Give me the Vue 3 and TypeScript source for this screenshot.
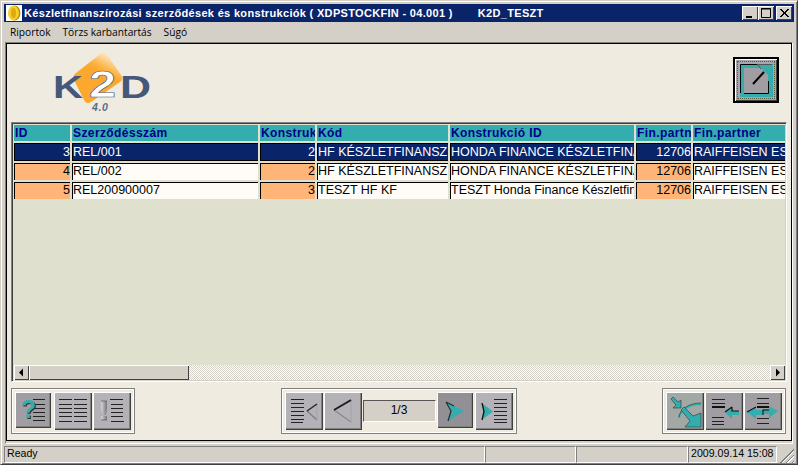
<script setup lang="ts">
interface Column {
  title: string;
  numeric?: boolean;
}

const columns: Column[] = [
  { title: "ID", numeric: true },
  { title: "Szerződésszám" },
  { title: "Konstruk", numeric: true },
  { title: "Kód" },
  { title: "Konstrukció ID" },
  { title: "Fin.partn", numeric: true },
  { title: "Fin.partner" },
];

const rows: string[][] = [
  ["3", "REL/001", "2", "HF KÉSZLETFINANSZÍROZÁS", "HONDA FINANCE KÉSZLETFINANSZÍROZÁS", "12706", "RAIFFEISEN ESZKÖZ"],
  ["4", "REL/002", "2", "HF KÉSZLETFINANSZÍROZÁS", "HONDA FINANCE KÉSZLETFINANSZÍROZÁS", "12706", "RAIFFEISEN ESZKÖZ"],
  ["5", "REL200900007", "3", "TESZT HF KF", "TESZT Honda Finance Készletfinanszírozás", "12706", "RAIFFEISEN ESZKÖZ"],
];

const menus = ["Riportok", "Törzs karbantartás", "Súgó"];
const statusPanels = ["Ready", "", "", "2009.09.14 15:08"];
</script>

<template>
  <div class="window">
    <div class="titlebar">
      <span class="app-icon">
        <svg width="16" height="16" viewBox="0 0 16 16">
          <ellipse cx="8.5" cy="8" rx="6" ry="7.5" fill="#b98a00" />
          <ellipse cx="7.5" cy="8" rx="5.5" ry="7.2" fill="#f7cf2a" />
          <ellipse cx="7.5" cy="8" rx="2.5" ry="5" fill="#e0a810" />
        </svg>
      </span>
      <span class="title-text">Készletfinanszírozási szerződések és konstrukciók ( XDPSTOCKFIN - 04.001 )</span>
      <span class="title-user">K2D_TESZT</span>
      <div class="win-buttons">
        <button class="win-btn">
          <svg width="16" height="14" viewBox="0 0 16 14"><path d="M4 10h6v2H4z" fill="#000" /></svg>
        </button>
        <button class="win-btn">
          <svg width="16" height="14" viewBox="0 0 16 14"><path d="M3.5 2.5h9v9h-9zM3 3h10" fill="none" stroke="#000" /></svg>
        </button>
        <button class="win-btn close">
          <svg width="16" height="14" viewBox="0 0 16 14"><path d="M4 3l8 8M5 3l8 8M12 3l-8 8M13 3l-8 8" stroke="#000" /></svg>
        </button>
      </div>
    </div>

    <div class="menubar">
      <span v-for="item in menus" :key="item" class="menu-item">{{ item }}</span>
    </div>

    <div class="client-bevel">
      <div class="client">
        <div class="top-area">
          <svg class="logo" width="100" height="64" viewBox="0 0 100 64">
            <defs>
              <linearGradient id="diamond" x1="0.8" y1="0.02" x2="0.6" y2="0.4">
                <stop offset="0" stop-color="#fdf2e2" />
                <stop offset="0.7" stop-color="#fcb950" />
                <stop offset="1" stop-color="#faa82e" />
              </linearGradient>
            </defs>
            <path d="M46 5Q51 0 55 6L68 25Q71 29 67 32L38 52Q33 55 31 50L21 30Q19 26 23 23Z" fill="url(#diamond)" />
            <text x="0" y="48" class="logo-letter" textLength="30" lengthAdjust="spacingAndGlyphs">K</text>
            <text x="36" y="47" class="logo-two" textLength="27" lengthAdjust="spacingAndGlyphs">2</text>
            <text x="67" y="48" class="logo-letter" textLength="31" lengthAdjust="spacingAndGlyphs">D</text>
            <text x="39" y="61" class="logo-version">4.0</text>
          </svg>
          <button class="expand-btn">
            <span class="expand-focus">
              <svg width="38" height="38" viewBox="0 0 38 38">
                <path d="M3 3h33v33H3z" fill="#33adad" />
                <path d="M7 7h24v25H7z" fill="#a09ea2" />
                <path d="M3.5 32V3.5H20M7 32.5h24.5V20" fill="none" stroke="#000" />
                <path d="M20 3h16v16z" fill="#33adad" />
                <path d="M20 3.500h15M20 3l4 5" stroke="#555" fill="none" />
                <path d="M16 23l11-12" stroke="#000" stroke-width="2" />
              </svg>
            </span>
          </button>
        </div>

        <div class="data-grid">
          <div class="grid-body">
            <div class="grid-table">
              <div v-for="col in columns" :key="col.title" class="head-cell">{{ col.title }}</div>
              <template v-for="(row, r) in rows" :key="r">
                <div
                  v-for="(value, c) in row"
                  :key="c"
                  class="cell"
                  :class="{ selected: r === 0, numeric: columns[c].numeric }"
                >
                  {{ value }}
                </div>
              </template>
            </div>
          </div>
          <div class="scrollbar">
            <span class="scroll-btn">
              <svg width="15" height="15" viewBox="0 0 15 15"><path d="M9 3.5v8L5 7.5z" fill="#000" /></svg>
            </span>
            <span class="scroll-thumb"></span>
            <span class="scroll-track"></span>
            <span class="scroll-btn">
              <svg width="15" height="15" viewBox="0 0 15 15"><path d="M6 3.5v8l4-4z" fill="#000" /></svg>
            </span>
          </div>
        </div>

        <div class="toolbar">
          <div class="tool-group">
            <button class="tool-btn dark narrow spaced">
              <svg width="32" height="32" viewBox="0 0 32 32">
                <path d="M16 5.500h12M16 10.500h12M16 14.500h12M16 18.500h12M16 22.500h12M16 26.500h12" stroke="#222" />
                <text x="4" y="24" class="help-mark">?</text>
              </svg>
            </button>
            <button class="tool-btn">
              <svg width="34" height="34" viewBox="0 0 34 34">
                <path d="M3 5.5h13M18 5.5h13M3 10.5h13M18 10.5h13M3 14.5h13M18 14.5h13M3 18.5h13M18 18.5h13M3 22.5h13M18 22.5h13M3 27.5h13M18 27.5h13" stroke="#222" />
              </svg>
            </button>
            <button class="tool-btn">
              <svg width="34" height="34" viewBox="0 0 34 34">
                <defs>
                  <linearGradient id="bang" x1="0" x2="1" y1="0" y2="0">
                    <stop offset="0" stop-color="#d8d6d8" />
                    <stop offset="1" stop-color="#777577" />
                  </linearGradient>
                </defs>
                <path d="M15 5.5h13M16 10.5h12M16 14.5h12M16 18.5h12M16 22.5h12M16 27.5h13" stroke="#222" />
                <path d="M6 7h6v8l-1 6H8l-2-6z" fill="url(#bang)" />
                <path d="M6 22h6v4H6z" fill="url(#bang)" />
                <path d="M6 7h6M6 26h6" stroke="#555" stroke-width="0.7" />
              </svg>
            </button>
          </div>

          <div class="tool-group">
            <button class="tool-btn">
              <svg width="34" height="34" viewBox="0 0 34 34">
                <path d="M4 5.5h13M4 9.5h13M4 13.5h13M4 17.5h13M4 21.5h13M4 25.5h13M4 28.5h12" stroke="#222" />
                <path d="M20 17l10 9" fill="none" stroke="#807e82" stroke-width="1.4" />
                <path d="M30 10v16" fill="none" stroke="#a4a2a6" stroke-width="1" />
                <path d="M30 10L20 17" stroke="#222" stroke-width="1.4" />
              </svg>
            </button>
            <button class="tool-btn">
              <svg width="34" height="34" viewBox="0 0 34 34">
                <path d="M8 16l17 12" fill="none" stroke="#8a888c" stroke-width="1.4" />
                <path d="M25 28V6" fill="none" stroke="#a4a2a6" stroke-width="1" />
                <path d="M25 6L8 16" stroke="#1c1c1c" stroke-width="2" />
              </svg>
            </button>
            <div class="page-box">1/3</div>
            <button class="tool-btn darker narrow spaced-sm">
              <svg width="32" height="32" viewBox="0 0 32 32">
                <path d="M7 8l18 9-16 10 3-10z" fill="#33adad" />
                <path d="M7 8l5 9-3 10M7 8l8 4" fill="none" stroke="#2c2c2c" stroke-width="1.2" />
              </svg>
            </button>
            <button class="tool-btn">
              <svg width="34" height="34" viewBox="0 0 34 34">
                <path d="M17 5.5h13M17 9.5h13M17 13.5h13M17 17.5h13M17 21.5h13M17 25.5h13M17 28.5h13" stroke="#222" />
                <path d="M6 10l10 7.5L6 25z" fill="#33adad" />
                <path d="M5 9l2 8.500-2 8.500" fill="none" stroke="#111" stroke-width="1.3" />
              </svg>
            </button>
          </div>

          <div class="tool-group">
            <button class="tool-btn lighter">
              <svg width="34" height="34" viewBox="0 0 34 34">
                <path d="M3 5L5 3L10 8L13 6V14H5L8 11Z" fill="#33adad" stroke="#333" stroke-width="0.6" />
                <path d="M11 24c1-8 10-14 22-14" fill="none" stroke="#33adad" stroke-width="2" />
                <path d="M11 24c1-8 10-14 22-14" fill="none" stroke="#222" stroke-width="0.5" transform="translate(0 -1)" />
                <path d="M13 16L16 13L25 22L33 19V33H17L22 27Z" fill="#33adad" stroke="#333" stroke-width="0.6" />
              </svg>
            </button>
            <button class="tool-btn dark">
              <svg width="34" height="34" viewBox="0 0 34 34">
                <path d="M5 5.500h13M5 9.500h13M5 23.500h12M5 27.500h12M5 30.500h12" stroke="#222" />
                <path d="M5 13h13" stroke="#111" stroke-width="2" />
                <path d="M18 18l7-5v4h7v4h-7v4z" fill="#33adad" />
                <path d="M18 18l7-5M25 13v4h7" fill="none" stroke="#111" stroke-width="1.2" />
              </svg>
            </button>
            <button class="tool-btn dark">
              <svg width="34" height="34" viewBox="0 0 34 34">
                <path d="M11 4.500h12M11 9.500h12M11 24.500h12M11 29.500h12" stroke="#222" />
                <path d="M11 13h12" stroke="#111" stroke-width="2" />
                <path d="M1 18l9-5v3h7v5h-7v4z" fill="#33adad" />
                <path d="M32 17l-9-5v3h-6v5h6v4z" fill="#33adad" />
                <path d="M1 18l9-5M17 21v-5h6" fill="none" stroke="#111" stroke-width="1.1" />
              </svg>
            </button>
          </div>
        </div>
      </div>
    </div>

    <div class="statusbar">
      <span v-for="(text, i) in statusPanels" :key="i" class="status-panel">{{ text }}</span>
      <span class="grip"></span>
    </div>
  </div>
</template>

<style>
html,
body {
  margin: 0;
  background: #d4d0c8;
}
</style>

<style scoped>
.window {
  box-sizing: border-box;
  width: 798px;
  height: 465px;
  display: flex;
  flex-direction: column;
  padding: 3px 3px 2px;
  background: #d4d0c8;
  border: 1px solid;
  border-color: #d4d0c8 #404040 #404040 #d4d0c8;
  box-shadow: inset 1px 1px 0 #fff, inset -1px -1px 0 #808080;
  font-family: "Liberation Sans", Arial, sans-serif;
  overflow: hidden;
}

.titlebar {
  flex: none;
  height: 18px;
  display: flex;
  align-items: center;
  background: #0a246a;
  color: #fff;
  font: bold 11px "Liberation Sans", Arial, sans-serif;
  letter-spacing: 0.32px;
}

.app-icon {
  flex: none;
  width: 16px;
  height: 16px;
  margin: 0 2px;
  background: #fff;
}

.app-icon svg {
  display: block;
}

.title-text {
  white-space: pre;
}

.title-user {
  margin-left: 25px;
}

.win-buttons {
  margin-left: auto;
  display: flex;
  margin-right: 2px;
}

.win-btn {
  width: 16px;
  height: 14px;
  padding: 0;
  border: 0;
  background: #d4d0c8;
  box-shadow: inset 1px 1px 0 #fff, inset -1px -1px 0 #404040;
}

.win-btn svg {
  display: block;
}

.win-btn.close {
  margin-left: 2px;
}

.menubar {
  flex: none;
  height: 20px;
  display: flex;
  align-items: center;
  gap: 12px;
  padding-left: 6px;
  font-family: "Open Sans", sans-serif;
  font-size: 10.2px;
  color: #000;
}

.client-bevel {
  flex: none;
  height: 400px;
  margin: 0 1px;
  border: 1px solid;
  border-color: #808080 #fff #fff #808080;
}

.client {
  box-sizing: border-box;
  height: 398px;
  display: flex;
  flex-direction: column;
  gap: 6px;
  padding: 0 4px 6px;
  border: 1px solid #000;
  background: #efebe0;
}

.top-area {
  flex: none;
  height: 78px;
  margin-bottom: -6px;
  display: flex;
  justify-content: space-between;
  align-items: flex-start;
}

.logo {
  margin: 6px 0 0 42px;
}

.logo-letter {
  font: bold 32px "Liberation Sans", sans-serif;
  fill: #46587a;
}

.logo-two {
  font: bold 37px "Liberation Sans", sans-serif;
  fill: #fff;
  stroke: #46587a;
  stroke-width: 0.6px;
}

.logo-version {
  font: italic bold 10.5px "Liberation Sans", sans-serif;
  letter-spacing: 0.6px;
  fill: #5a6a88;
}

.expand-btn {
  box-sizing: border-box;
  width: 46px;
  height: 46px;
  margin: 13px 8px 0 0;
  padding: 2px;
  border: 2px solid #000;
  background: #a8a6aa;
  box-shadow: inset 1px 1px 0 #fff, inset -1px -1px 0 #404040;
}

.expand-focus {
  display: block;
  width: 38px;
  height: 38px;
  outline: 1px dotted #5a5a40;
  outline-offset: -1px;
}

.expand-focus svg {
  display: block;
}

.data-grid {
  flex: 1;
  min-height: 0;
  display: flex;
  flex-direction: column;
  border: 1px solid;
  border-color: #808080 #fff #fff #808080;
  box-shadow: inset 1px 1px 0 #404040, inset -1px -1px 0 #d4d0c8;
  background: #dfe0ce;
  padding: 1px;
}

.grid-body {
  flex: 1;
  min-height: 0;
  overflow: hidden;
  padding: 1px 0 0 1px;
}

.grid-table {
  display: grid;
  grid-template-columns: 56px 186px 55px 131px 184px 55px 92px;
  grid-template-rows: 16px 18px 17px 17px;
  gap: 2px;
  font-size: 12.5px;
}

.head-cell {
  background: #33adad;
  color: #00008b;
  font-size: 12px;
  font-weight: bold;
  line-height: 16px;
  letter-spacing: 0.4px;
  padding-left: 1px;
  white-space: nowrap;
  overflow: hidden;
}

.cell {
  box-sizing: border-box;
  border-top: 1px solid #000;
  border-left: 1px solid #000;
  background: #fffcf8;
  color: #000;
  line-height: 15px;
  white-space: nowrap;
  overflow: hidden;
}

.cell.numeric {
  background: #ffb478;
  text-align: right;
}

.cell.selected {
  background: #0a246a;
  color: #fff;
  line-height: 16px;
  border-bottom: 1px solid #000;
}

.scrollbar {
  flex: none;
  height: 15px;
  display: flex;
  margin-left: 1px;
}

.scroll-btn {
  flex: none;
  width: 15px;
  height: 15px;
  background: #d4d0c8;
  box-shadow: inset 1px 1px 0 #fff, inset -1px -1px 0 #404040;
}

.scroll-btn svg {
  display: block;
}

.scroll-thumb {
  flex: none;
  width: 160px;
  background: #d4d0c8;
  box-shadow: inset 1px 1px 0 #fff, inset -1px -1px 0 #404040;
}

.scroll-track {
  flex: 1;
  background: repeating-conic-gradient(#fff 0 25%, #d4d0c8 0 50%) 0 0 / 2px 2px;
}

.toolbar {
  flex: none;
  height: 46px;
  margin-right: 1px;
  display: flex;
  justify-content: space-between;
}

.tool-group {
  box-sizing: border-box;
  height: 46px;
  display: flex;
  align-items: flex-start;
  gap: 1px;
  padding: 3px;
  border: 1px solid #808080;
  box-shadow: inset 1px 1px 0 #fff, inset -1px -1px 0 #fff;
}

.tool-btn {
  box-sizing: border-box;
  flex: none;
  width: 38px;
  height: 38px;
  padding: 2px;
  border: 0;
  background: #b4b2b6;
  box-shadow: inset 1px 1px 0 #fff, inset -1px -1px 0 #404040, inset -2px -2px 0 #808080;
}

.tool-btn svg {
  display: block;
}

.tool-btn.narrow {
  width: 36px;
  height: 36px;
}

.tool-btn.spaced {
  margin-right: 2px;
}

.tool-btn.spaced-sm {
  margin-right: 1px;
}

.tool-btn.dark {
  background: #a09ea2;
}

.tool-btn.darker {
  background: #929094;
}

.tool-btn.lighter {
  background: #a4a8a4;
}

.help-mark {
  font: bold 25px "Liberation Sans", sans-serif;
  fill: #33adad;
  filter: drop-shadow(1px 1px 0 #333);
}

.page-box {
  box-sizing: border-box;
  flex: none;
  width: 73px;
  height: 22px;
  margin-top: 8px;
  padding-top: 2px;
  text-align: center;
  font-size: 12px;
  color: #000;
  background: #d4d0c8;
  border: 1px solid;
  border-color: #555 #fff #fff #555;
}

.statusbar {
  flex: none;
  height: 17px;
  margin: 2px 0 0;
  display: flex;
  font-size: 10.6px;
  color: #000;
}

.status-panel {
  box-sizing: border-box;
  height: 17px;
  line-height: 13px;
  padding-left: 2px;
  border: 1px solid;
  border-color: #808080 #fff #fff #808080;
  white-space: nowrap;
}

.status-panel:nth-child(1) {
  width: 481px;
}

.status-panel:nth-child(2) {
  width: 91px;
}

.status-panel:nth-child(3) {
  width: 112px;
}

.status-panel:nth-child(4) {
  width: 89px;
}

.grip {
  flex: 1;
  background: repeating-linear-gradient(135deg, #d4d0c8 0 2px, #808080 2px 3px, #fff 3px 4px);
  clip-path: polygon(100% 0, 100% 100%, 0 100%);
}
</style>
